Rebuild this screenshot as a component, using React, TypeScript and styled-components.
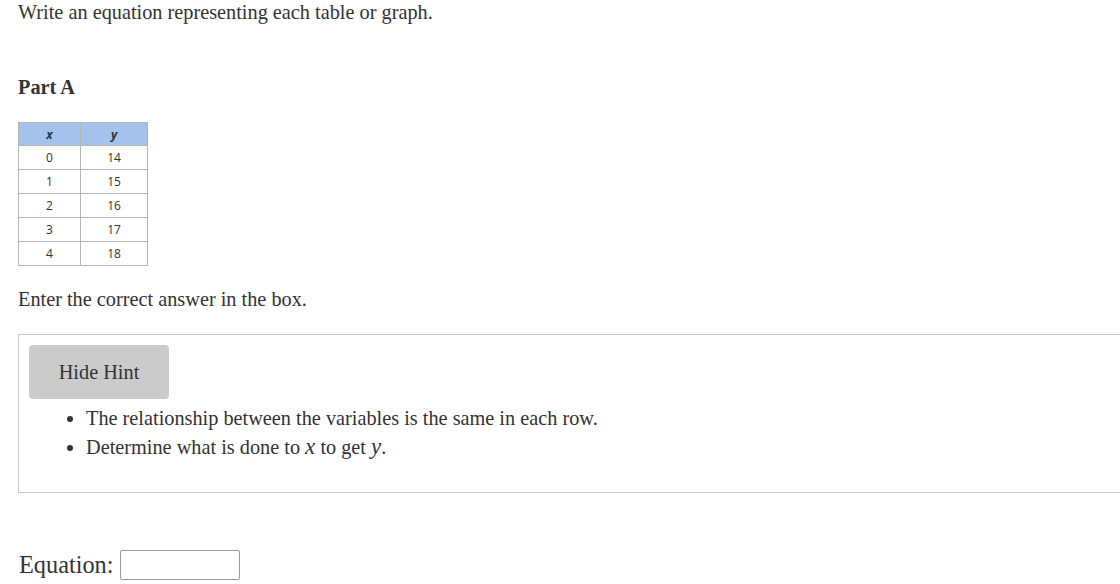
import React from "react";
import styled, { createGlobalStyle } from "styled-components";

const Global = createGlobalStyle`
  html, body { margin: 0; padding: 0; background: #fff; overflow: hidden; }
  body { font-family: "Liberation Serif", "Times New Roman", serif; color: #333; }
`;

const Page = styled.div`
  padding: 0 0 0 18px;
  width: 1200px;
`;

const Prompt = styled.p`
  margin: 0;
  padding-top: 1px;
  font-size: 20.3px;
  line-height: 22px;
`;

const PartTitle = styled.h3`
  margin: 53px 0 0;
  font-size: 20.3px;
  font-weight: bold;
  line-height: 22px;
`;

const Table = styled.table`
  margin-top: 24px;
  border-collapse: collapse;
  font-family: "Open Sans", "Noto Sans", sans-serif;
  font-size: 12px;
  color: #333;
`;

const Th = styled.th<{ $w: number }>`
  width: ${(p) => p.$w}px;
  height: 22px;
  padding: 0;
  background: #a4c2eb;
  border: 1px solid #b5b5b5;
  font-style: italic;
  font-weight: bold;
  text-align: center;
`;

const Td = styled.td`
  height: 23px;
  padding: 0;
  border: 1px solid #b5b5b5;
  text-align: center;
`;

const Instruction = styled.p`
  margin: 22px 0 0;
  font-size: 20.3px;
  line-height: 22px;
`;

const HintBox = styled.div`
  margin-top: 24px;
  border: 1px solid #c8c8c8;
  border-right: none;
  padding: 10px 0 30px 10px;
`;

const HintButton = styled.button`
  width: 140px;
  height: 54px;
  border: none;
  border-radius: 4px;
  background: #cbcbcb;
  font-family: "Liberation Serif", "Times New Roman", serif;
  font-size: 20.3px;
  color: #333;
  padding: 0;
  cursor: pointer;
`;

const HintList = styled.ul`
  margin: 5px 0 0;
  padding-left: 57px;
  font-size: 20.3px;
  line-height: 29px;
`;

const MathVar = styled.span`
  font-family: "Liberation Serif", serif;
  font-style: italic;
  font-size: 23px;
  line-height: 20px;
`;

const EquationRow = styled.div`
  margin-top: 57px;
  display: flex;
  align-items: center;
  gap: 7px;
  font-size: 24.3px;
  padding-left: 1px;
`;

const EquationInput = styled.input`
  width: 120px;
  height: 30px;
  box-sizing: border-box;
  border: 1px solid #9a9a9a;
  border-radius: 2px;
`;

const rows = [
  [0, 14],
  [1, 15],
  [2, 16],
  [3, 17],
  [4, 18],
];

export default function App() {
  return (
    <>
      <Global />
      <Page>
        <Prompt>Write an equation representing each table or graph.</Prompt>
        <PartTitle>Part A</PartTitle>
        <Table>
          <thead>
            <tr>
              <Th $w={61}>x</Th>
              <Th $w={66}>y</Th>
            </tr>
          </thead>
          <tbody>
            {rows.map(([x, y]) => (
              <tr key={x}>
                <Td>{x}</Td>
                <Td>{y}</Td>
              </tr>
            ))}
          </tbody>
        </Table>
        <Instruction>Enter the correct answer in the box.</Instruction>
        <HintBox>
          <HintButton>Hide Hint</HintButton>
          <HintList>
            <li>The relationship between the variables is the same in each row.</li>
            <li>
              Determine what is done to <MathVar>x</MathVar> to get <MathVar>y</MathVar>.
            </li>
          </HintList>
        </HintBox>
        <EquationRow>
          <span>Equation:</span>
          <EquationInput />
        </EquationRow>
      </Page>
    </>
  );
}
